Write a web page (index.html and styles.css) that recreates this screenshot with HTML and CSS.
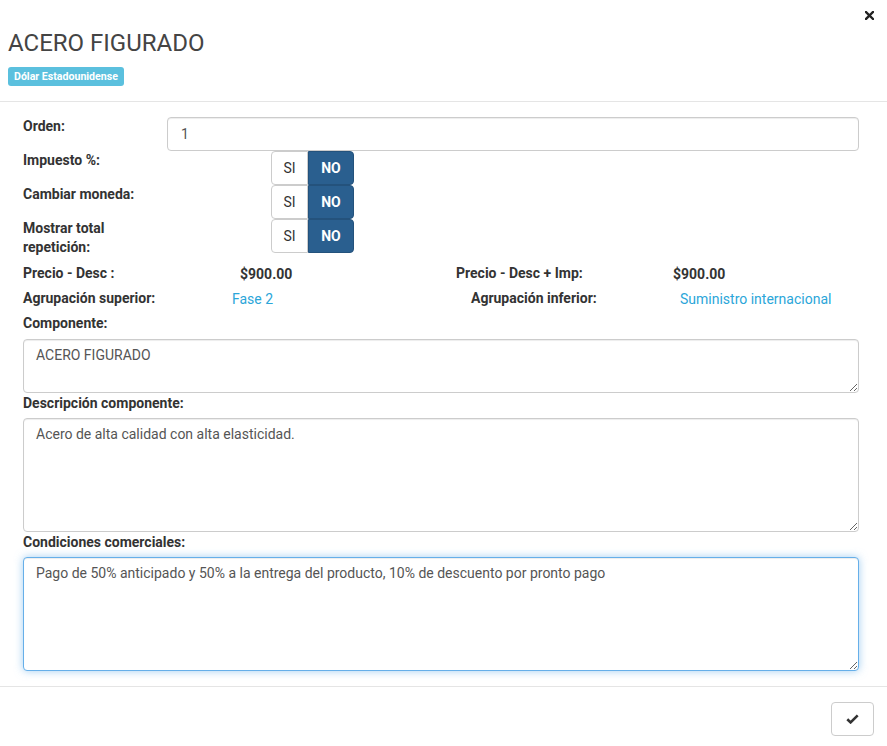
FILE: index.html
```html
<!DOCTYPE html>
<html lang="es">
<head>
<meta charset="utf-8">
<title>ACERO FIGURADO</title>
<link rel="stylesheet" href="styles.css">
</head>
<body>
<div class="modal">
  <div class="modal-header">
    <button class="close" type="button" aria-label="Cerrar">
      <svg width="9" height="9" viewBox="0 0 9 9"><path d="M1 1 L8 8 M8 1 L1 8" stroke="#222" stroke-width="2.4" stroke-linecap="square"/></svg>
    </button>
    <h4 class="title">ACERO FIGURADO</h4>
    <span class="badge">Dólar Estadounidense</span>
  </div>
  <div class="modal-body">
    <div class="form-row">
      <label class="lbl">Orden:</label>
      <input class="input" type="text" value="1">
    </div>
    <div class="form-row">
      <label class="lbl">Impuesto %:</label>
      <div class="toggle"><span class="opt">SI</span><span class="opt on">NO</span></div>
    </div>
    <div class="form-row">
      <label class="lbl">Cambiar moneda:</label>
      <div class="toggle"><span class="opt">SI</span><span class="opt on">NO</span></div>
    </div>
    <div class="form-row">
      <label class="lbl">Mostrar total repetición:</label>
      <div class="toggle"><span class="opt">SI</span><span class="opt on">NO</span></div>
    </div>
    <div class="info-row prices">
      <span class="lbl">Precio - Desc :</span>
      <span class="val">$900.00</span>
      <span class="lbl">Precio - Desc + Imp:</span>
      <span class="val">$900.00</span>
    </div>
    <div class="info-row groups">
      <span class="lbl">Agrupación superior:</span>
      <a class="link" href="#">Fase 2</a>
      <span class="lbl">Agrupación inferior:</span>
      <a class="link" href="#">Suministro internacional</a>
    </div>
    <div class="field first">
      <label class="lbl">Componente:</label>
      <textarea class="input area small">ACERO FIGURADO</textarea>
    </div>
    <div class="field">
      <label class="lbl">Descripción componente:</label>
      <textarea class="input area big">Acero de alta calidad con alta elasticidad.</textarea>
    </div>
    <div class="field">
      <label class="lbl">Condiciones comerciales:</label>
      <textarea class="input area big focus">Pago de 50% anticipado y 50% a la entrega del producto, 10% de descuento por pronto pago</textarea>
    </div>
  </div>
  <div class="modal-footer">
    <button class="btn" type="button" aria-label="Aceptar">
      <svg width="13" height="10" viewBox="0 0 13 10"><path d="M1.3 5.2 L4.6 8.4 L11.7 1.4" fill="none" stroke="#333" stroke-width="2.6"/></svg>
    </button>
  </div>
</div>
</body>
</html>
```
FILE: styles.css
```css
* { box-sizing: border-box; }
html, body { margin: 0; padding: 0; background: #fff; }
body { font-family: Roboto, "Liberation Sans", Arial, sans-serif; font-size: 14px; color: #333; }

.modal { width: 887px; }

.modal-header {
  position: relative;
  padding: 29px 8px 15px;
  border-bottom: 1px solid #e5e5e5;
}
.title {
  margin: 0;
  font-size: 24px;
  font-weight: 400;
  line-height: 28px;
  color: #444;
}
.badge {
  display: inline-block;
  margin-top: 10px;
  height: 19px;
  padding: 0 6px;
  line-height: 19px;
  font-size: 10.6px;
  font-weight: 700;
  color: #fff;
  background: #5bc0de;
  border-radius: 3px;
}
.close {
  position: absolute;
  top: 11px;
  left: 865px;
  padding: 0;
  border: 0;
  background: none;
  line-height: 0;
}

.modal-body { padding: 15px 28px 15px 23px; }

.lbl { font-weight: 700; line-height: 19px; color: #333; }

.form-row {
  display: grid;
  grid-template-columns: 144px 1fr;
  align-items: start;
}

.input {
  display: block;
  width: 100%;
  height: 34px;
  padding: 5px 12px 6px;
  font: 14px/20px Roboto, "Liberation Sans", Arial, sans-serif;
  color: #555;
  background: #fff;
  border: 1px solid #ccc;
  border-radius: 4px;
  box-shadow: inset 0 1px 1px rgba(0,0,0,.075);
}
input.input { padding: 6px 13px; }

.toggle { display: flex; margin-left: 104px; }
.opt {
  height: 34px;
  line-height: 32px;
  border: 1px solid #ccc;
  background: #fff;
  color: #333;
  text-align: center;
  width: 37px;
  border-radius: 4px 0 0 4px;
}
.opt.on {
  width: 46px;
  background: #2a5f8f;
  border-color: #24527c;
  color: #fff;
  font-weight: 700;
  border-radius: 0 4px 4px 0;
}

.info-row {
  display: grid;
  margin-top: 5px;
  line-height: 20px;
}
.prices { margin-top: 7px; grid-template-columns: 217px 216px 217px 1fr; }
.groups { grid-template-columns: 209px 239px 209px 1fr; }
.val { font-weight: 700; color: #333; }
.link { color: #2ba6d9; text-decoration: none; }

.field .lbl { display: block; line-height: 20px; margin-bottom: 5px; }
.field.first { margin-top: 4px; }
.field.first .lbl { margin-bottom: 6px; }
.area { resize: vertical; }
.area.small { height: 54px; }
.area.big { height: 114px; }
.area.focus {
  border-color: #66afe9;
  outline: 0;
  box-shadow: inset 0 1px 1px rgba(0,0,0,.075), 0 0 8px rgba(102,175,233,.6);
}

.modal-footer {
  display: flex;
  justify-content: flex-end;
  padding: 15px 13px 15px;
  border-top: 1px solid #e5e5e5;
}
.btn {
  width: 43px;
  height: 34px;
  padding: 0;
  background: #fff;
  border: 1px solid #ccc;
  border-radius: 4px;
  display: flex;
  align-items: center;
  justify-content: center;
}
```
